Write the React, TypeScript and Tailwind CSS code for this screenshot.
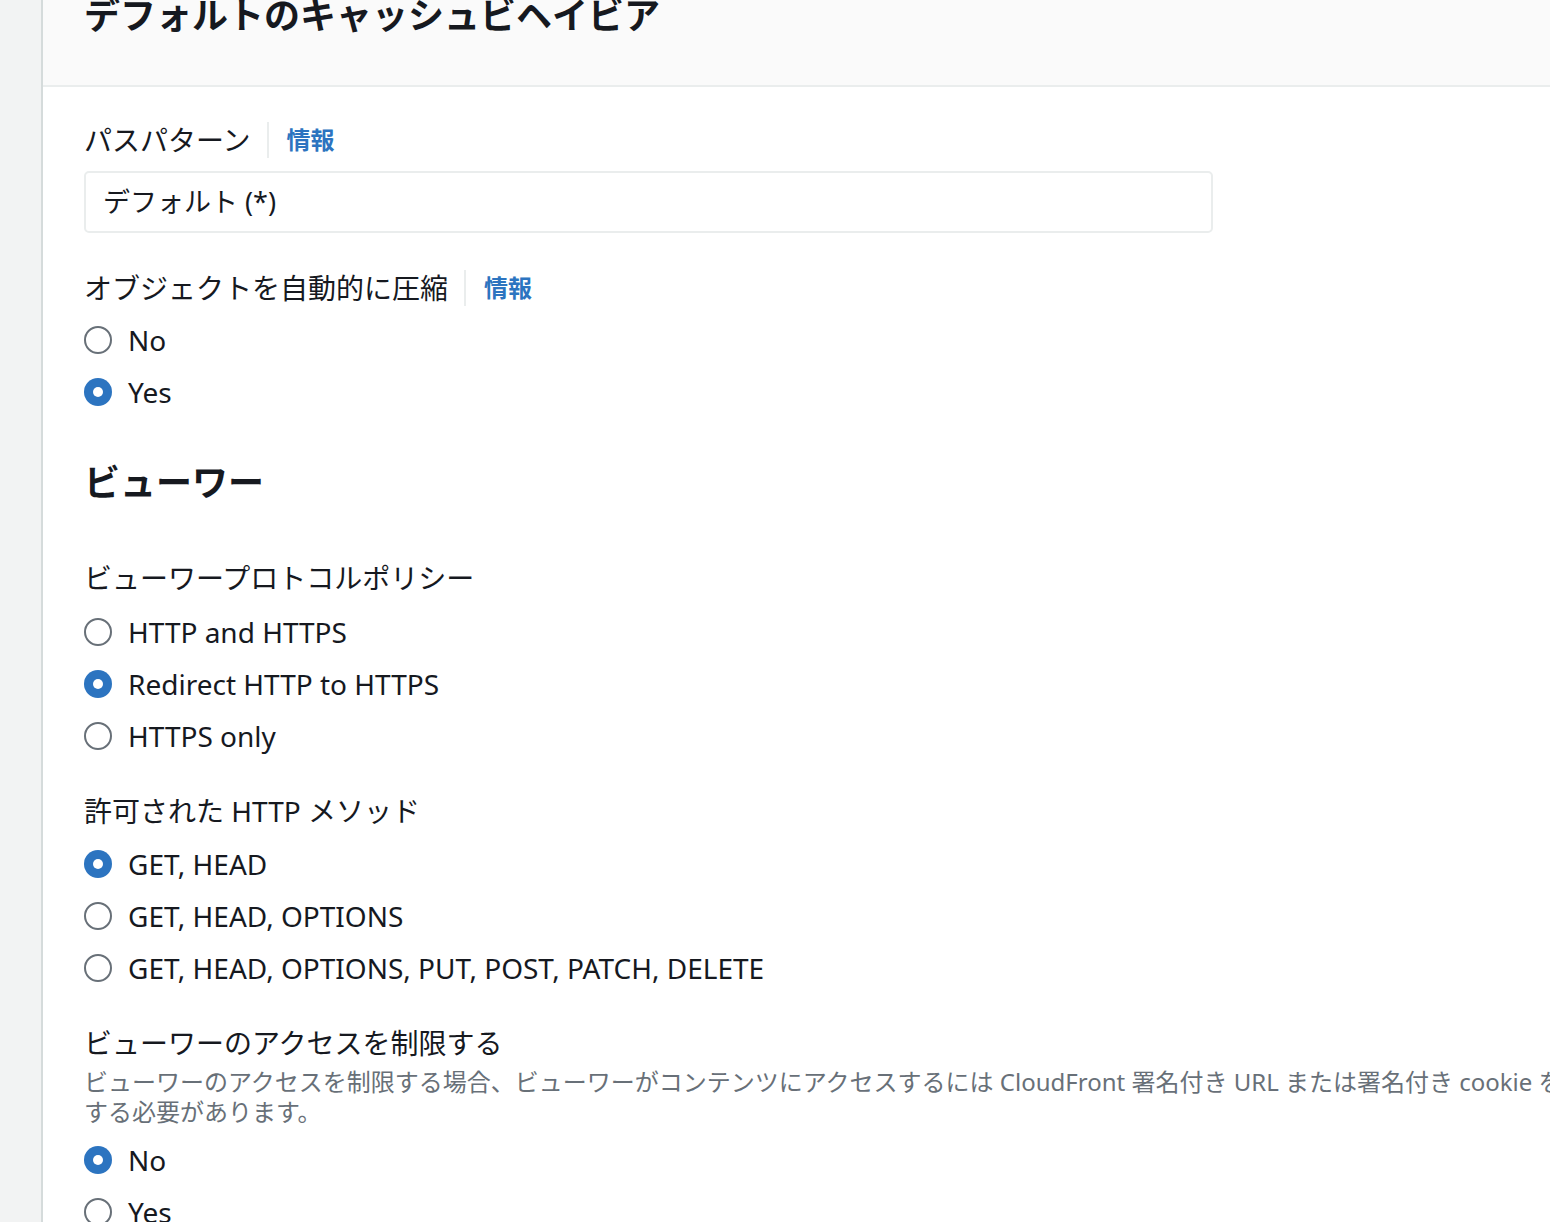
import React from 'react';

const FONT = { fontFamily: '"Noto Sans", "Noto Sans CJK JP", sans-serif' };

function Radio({ label, checked }: { label: string; checked?: boolean }) {
    return (
        <div className="flex items-center h-[52px]">
            {checked ? (
                <span className="w-[28px] h-[28px] rounded-full bg-[#2c74c0] flex items-center justify-center shrink-0">
                    <span className="w-[10px] h-[10px] rounded-full bg-white" />
                </span>
            ) : (
                <span className="w-[28px] h-[28px] rounded-full border-2 border-[#687078] bg-white shrink-0" />
            )}
            <span className="ml-[16px] text-[28px] text-[#16191f] leading-[36px]">{label}</span>
        </div>
    );
}

function Label({ text, info }: { text: string; info?: boolean }) {
    return (
        <div className="flex items-center h-[36px]">
            <span className="text-[28px] leading-[36px] text-[#16191f]">{text}</span>
            {info && (
                <>
                    <span className="ml-[16px] w-[2px] h-[36px] bg-[#eaeded]" />
                    <span className="ml-[18px] text-[24px] font-bold text-[#2c74c0]">情報</span>
                </>
            )}
        </div>
    );
}

export default function App() {
    return (
        <div className="w-full h-[1222px] overflow-hidden flex bg-white" style={FONT}>
            {/* left rail */}
            <div className="w-[43px] shrink-0 bg-[#f2f3f3] border-r-2 border-[#d5dbdb]" />

            <div className="flex-1 flex flex-col min-w-0">
                {/* header */}
                <div className="shrink-0 h-[87px] bg-[#fafafa] border-b-2 border-[#eaeded] pl-[41px] overflow-hidden">
                    <h1 className="-mt-[6px] text-[36px] leading-[44px] font-bold text-[#16191f] whitespace-nowrap">
                        デフォルトのキャッシュビヘイビア
                    </h1>
                </div>

                <div className="shrink-0 pl-[41px] pt-[35px] whitespace-nowrap">
                    <Label text="パスパターン" info />
                    <div className="mt-[13px] w-[1129px] h-[62px] border-2 border-[#eaeded] rounded-[5px] flex items-center pl-[17px] text-[27px] text-[#16191f]">
                        デフォルト (*)
                    </div>

                    <div className="mt-[37px]">
                        <Label text="オブジェクトを自動的に圧縮" info />
                    </div>
                    <div className="mt-[8px]">
                        <Radio label="No" />
                        <Radio label="Yes" checked />
                    </div>

                    <h2 className="mt-[43px] text-[36px] leading-[44px] font-bold text-[#16191f]">ビューワー</h2>

                    <div className="mt-[55px]">
                        <Label text="ビューワープロトコルポリシー" />
                    </div>
                    <div className="mt-[10px]">
                        <Radio label="HTTP and HTTPS" />
                        <Radio label="Redirect HTTP to HTTPS" checked />
                        <Radio label="HTTPS only" />
                    </div>

                    <div className="mt-[31px]">
                        <Label text="許可された HTTP メソッド" />
                    </div>
                    <div className="mt-[9px]">
                        <Radio label="GET, HEAD" checked />
                        <Radio label="GET, HEAD, OPTIONS" />
                        <Radio label="GET, HEAD, OPTIONS, PUT, POST, PATCH, DELETE" />
                    </div>

                    <div className="mt-[31px]">
                        <Label text="ビューワーのアクセスを制限する" />
                    </div>
                    <p className="mt-[6px] text-[24px] leading-[30px] text-[#687078]">
                        ビューワーのアクセスを制限する場合、ビューワーがコンテンツにアクセスするには CloudFront 署名付き URL または署名付き cookie を
                        <br />
                        する必要があります。
                    </p>
                    <div className="mt-[7px]">
                        <Radio label="No" checked />
                        <Radio label="Yes" />
                    </div>
                </div>
            </div>
        </div>
    );
}
